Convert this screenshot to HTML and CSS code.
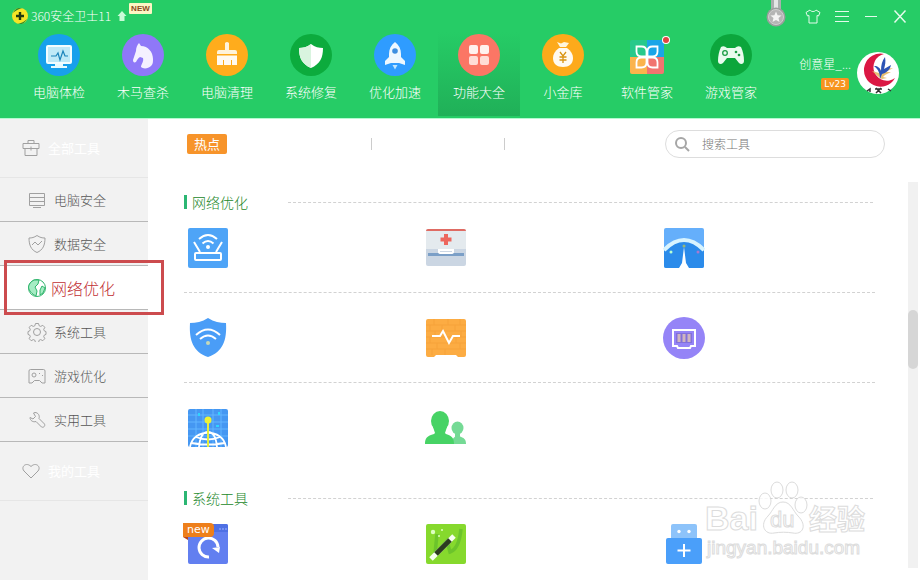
FILE: index.html
```html
<!DOCTYPE html>
<html lang="zh-CN">
<head>
    <meta charset="UTF-8">
    <title>360安全卫士</title>
    <link rel="stylesheet" href="styles.css">
</head>
<body>
    <div class="app">
        <header class="header">
            <div class="titlebar">
                <svg class="logo" viewBox="0 0 16 16"><circle cx="8" cy="8" r="8" fill="#f5e526"/><path d="M1 5a8 8 0 0 1 9-5C6 1 3 3 1 5zM15 11a8 8 0 0 1-9 5c4-1 7-3 9-5z" fill="#2a8a2c"/><path d="M8 4v8M4 8h8" stroke="#223c10" stroke-width="2.4"/></svg>
                <h1 class="title">360安全卫士11</h1>
                <svg class="upgrade" viewBox="0 0 10 12"><path d="M5 1l4.500 5H7.500v5h-5V6H.5z" fill="#c9fbd8"/></svg>
                <span class="new-tag">NEW</span>
                <div class="window-tools">
                    <button class="medal" aria-label="勋章"><svg viewBox="0 0 20 28"><path d="M5 0h10v10H5z" fill="#a9b0ad"/><path d="M8 0h4v9H8z" fill="#e4e6e5"/><circle cx="10" cy="17" r="9.500" fill="#9b9f9d"/><circle cx="10" cy="17" r="7.500" fill="#b5b5b5" stroke="#cfcfcf"/><path d="M10 11.500l1.600 3.700 4 .3-3.100 2.600 1 3.900-3.500-2.100L6.500 22l1-3.900-3.100-2.600 4-.3z" fill="#f4f4f4"/></svg></button>
                    <button class="win-btn" aria-label="换肤"><svg viewBox="0 0 16 16"><path d="M5 2C6 4 10 4 11 2l4 2.500-1.500 3.500-1.500-.5V15H4V7.500L2.500 8 1 4.500z"/></svg></button>
                    <button class="win-btn" aria-label="菜单"><svg viewBox="0 0 16 16"><path d="M1 3.500h14M1 8.500h14M1 13.500h14"/></svg></button>
                    <button class="win-btn" aria-label="最小化"><svg viewBox="0 0 16 16"><path d="M2 8.500h12"/></svg></button>
                    <button class="win-btn" aria-label="关闭"><svg viewBox="0 0 16 16"><path d="M2.500 2.500l11 12M13.500 2.500l-11 12" stroke-width="1.500"/></svg></button>
                </div>
            </div>
            <div class="header-main">
                <nav class="nav">
                    <a class="nav-item" href="#"><svg class="nav-icon" viewBox="0 0 42 42"><circle cx="21" cy="21" r="21" fill="#18a0ec"/><path d="M17 29h8v3h4v2H13v-2h4z" fill="#e8fbff"/><rect x="8" y="11" width="26" height="19" rx="2" fill="#f3fdff"/><rect x="10" y="13" width="22" height="15" fill="#bfe9f7"/><path d="M13 22h5l2-3 2 7 3-9 2 5h3" fill="none" stroke="#1b83ba" stroke-width="1.200"/></svg><span>电脑体检</span></a>
                    <a class="nav-item" href="#"><svg class="nav-icon" viewBox="0 0 42 42"><circle cx="21" cy="21" r="21" fill="#8f78f8"/><path d="M17 9l2 3c7 0 12 6 12 13 0 3 0 5-2 7-3 3-8 3-10 1 0-3 3-5 2-9l-3-1c-2 1-3 3-4 5-2 1-3 0-3-2l3-9c0-3 1-6 3-8z" fill="#f4f0ff"/></svg><span>木马查杀</span></a>
                    <a class="nav-item" href="#"><svg class="nav-icon" viewBox="0 0 42 42"><circle cx="21" cy="21" r="21" fill="#ffac1c"/><path d="M19 9q2-2 4 0v7h6q2 0 2 2v2H11v-2q0-2 2-2h6z" fill="#fff3da"/><path d="M11 21.500h20V31h-5v-5h-1v5h-7v-5h-1v5h-6z" fill="#fffaf0"/></svg><span>电脑清理</span></a>
                    <a class="nav-item" href="#"><svg class="nav-icon" viewBox="0 0 42 42"><circle cx="21" cy="21" r="21" fill="#0cab3d"/><path d="M21 10c4 3 8 4 12 4 0 10-3 16-12 20C12 30 9 24 9 14c4 0 8-1 12-4z" fill="#fff"/><path d="M21 10v24C12 30 9 24 9 14c4 0 8-1 12-4z" fill="#d9f4df"/></svg><span>系统修复</span></a>
                    <a class="nav-item" href="#"><svg class="nav-icon" viewBox="0 0 42 42"><circle cx="21" cy="21" r="21" fill="#2f9cff"/><path d="M21 8c4 3 6 7 6 12v3l4 4v4l-6-2h-8l-6 2v-4l4-4v-3c0-5 2-9 6-12z" fill="#eef8ff"/><circle cx="21" cy="17" r="2.800" fill="#3f8fe0"/><path d="M18.500 31h5L21 35.500z" fill="#bfe6ff"/></svg><span>优化加速</span></a>
                    <a class="nav-item active" href="#"><svg class="nav-icon" viewBox="0 0 42 42"><circle cx="21" cy="21" r="21" fill="#fb7665"/><g fill="#fff1ee"><rect x="11" y="11" width="9" height="9" rx="2"/><rect x="22" y="11" width="9" height="9" rx="2"/><rect x="11" y="22" width="9" height="9" rx="2" fill="#ffdcd6"/><rect x="22" y="22" width="9" height="9" rx="2" fill="#ffdcd6"/></g></svg><span>功能大全</span></a>
                    <a class="nav-item" href="#"><svg class="nav-icon" viewBox="0 0 42 42"><circle cx="21" cy="21" r="21" fill="#fdaa1b"/><path d="M15 8l4 1.500L22 8l5 1-3 4h-6z" fill="#fff6dc"/><path d="M17 14h8c4 3 6 6 6 10 0 6-4 9-10 9s-10-3-10-9c0-4 2-7 6-10z" fill="#fffaf0"/><path d="M18 18l3 4 3-4M21 22v7M17.500 23h7M17.500 26h7" fill="none" stroke="#d9930f" stroke-width="1.300"/></svg><span>小金库</span></a>
                    <a class="nav-item" href="#"><svg class="nav-icon" viewBox="0 0 42 42"><path d="M6 6h15v17H4V8q0-2 2-2z" fill="#27c98b"/><path d="M21 6h15q2 0 2 2v15H21z" fill="#1aa5e8"/><path d="M4 23h17v17H6q-2 0-2-2z" fill="#fbb44c"/><path d="M21 23h17v15q0 2-2 2H21z" fill="#f17470"/><g fill="none" stroke="#fff" stroke-width="1.800"><path d="M20.500 22.500h-5q-5 0-5-5v-5h5q5 0 5 5zM21.500 22.500v-5q0-5 5-5h5v5q0 5-5 5zM20.500 23.500v5q0 5-5 5h-5v-5q0-5 5-5zM21.500 23.500h5q5 0 5 5v5h-5q-5 0-5-5z"/></g><circle cx="40" cy="6" r="4" fill="#fff"/><circle cx="40" cy="6" r="3" fill="#e04540"/></svg><span>软件管家</span></a>
                    <a class="nav-item" href="#"><svg class="nav-icon" viewBox="0 0 42 42"><circle cx="21" cy="21" r="21" fill="#0ca63c"/><path d="M11 13q3-2 6 1h8q3-3 6-1c2 4 3 9 3 14 0 3-3 4-5 2l-4-5h-8l-4 5c-2 2-5 1-5-2 0-5 1-10 3-14z" fill="#e9fbee"/><circle cx="15" cy="19" r="2.300" fill="none" stroke="#1a9c44" stroke-width="1.300"/><circle cx="26" cy="18" r="1.300" fill="#1a9c44"/><circle cx="29" cy="21" r="1.300" fill="#1a9c44"/></svg><span>游戏管家</span></a>
                </nav>
                <div class="user">
                    <div class="user-info">
                        <span class="user-name">创意星_...</span>
                        <span class="user-level">Lv23</span>
                    </div>
                    <svg class="avatar" viewBox="0 0 42 42"><circle cx="21" cy="21" r="21" fill="#fff"/><path d="M27 2A16.500 16.500 0 1 0 38 26 13.500 13.500 0 1 1 27 2z" fill="#db1743"/><path d="M23 26l-8-7 7 2 1-1-5-6 5 3 2 3 3-3 8-1-7 4 5 0-6 3-2 2 4 1-5 1z" fill="#e6bf72"/><path d="M23 27c0-5-1-9-6-13 4 0 6 2 7 5 0-6 1-10 4-14 1 5 0 8-1 12l7-4c-1 5-5 8-9 9z" fill="#2c53b5"/><path d="M10 39l3-2v3M18 37h7M19 36l5 5M24 36l-5 5M31 37l3 2" stroke="#333" stroke-width="1.500" fill="none"/></svg>
                </div>
            </div>
        </header>

        <div class="content">
            <aside class="sidebar">
                <a class="side-item side-group" href="#"><svg class="side-icon" viewBox="0 0 20 20"><path d="M2 5.500h16v5H2zM4 10.500h12v7H4zM7 5.500v-3h6v3M10 8.500v4"/></svg><span>全部工具</span></a>
                <a class="side-item" href="#"><svg class="side-icon" viewBox="0 0 20 20"><path d="M2.500 3.500h15v12h-15zM2.500 7.500h15M2.500 11.500h15M6 17.500h8"/></svg><span>电脑安全</span></a>
                <a class="side-item" href="#"><svg class="side-icon" viewBox="0 0 20 20"><path d="M10 1.500c3 2 5 2.500 8 2.500 0 7-2 12-8 14.500C4 16 2 11 2 4c3 0 5-.5 8-2.500zM5 11l3-3 3 3 4-4"/></svg><span>数据安全</span></a>
                <a class="side-item current" href="#"><svg class="side-icon" viewBox="0 0 20 20"><circle cx="10" cy="10" r="8.500"/><path d="M4 4l3-2 5 0-1 4-3 3 2 4-1 5C5 16 2 13 1.500 9 2 7 3 5 4 4zM15 8l3 2-2 5-3 2 0-5z" fill="#a6ecc4"/></svg><span>网络优化</span></a>
                <a class="side-item" href="#"><svg class="side-icon" viewBox="0 0 20 20"><circle cx="10" cy="10" r="3.500"/><path d="M8.500 1.500h3l.7 2.300 1.500.6 2.100-1.100 2 2-1.100 2.200.6 1.400 1.700.7v2.800l-1.700.7-.6 1.400 1.100 2.200-2 2-2.100-1.100-1.500.6-.7 2.300h-3l-.7-2.300-1.500-.6-2.100 1.100-2-2 1.100-2.200-.6-1.400-1.700-.7V9.600l1.700-.7.6-1.400-1.100-2.200 2-2 2.100 1.100 1.500-.6z"/></svg><span>系统工具</span></a>
                <a class="side-item" href="#"><svg class="side-icon" viewBox="0 0 20 20"><path d="M3.500 3.500h13q1.500 0 1.500 1.500v12h-3l-2.500-2.500h-5L5 17H2V5q0-1.500 1.500-1.500z"/><circle cx="7" cy="9" r="2"/><path d="M12 7l1 1M15 9l1 1"/></svg><span>游戏优化</span></a>
                <a class="side-item" href="#"><svg class="side-icon" viewBox="0 0 20 20"><path d="M8 2.500c3 0 5 3 4 6l5.500 5.500c1 2-1 4-3 3L9 11.500c-3 1-6-1-6-4l3 1.500 2.500-2.500L6.500 3z"/></svg><span>实用工具</span></a>
                <a class="side-item side-group" href="#"><svg class="side-icon" viewBox="0 0 20 20"><path d="M10 17L3 10C-.5 6 5 .5 10 5.500 15 .5 20.500 6 17 10z"/></svg><span>我的工具</span></a>
                <div class="highlight"></div>
            </aside>

            <main class="main">
                <div class="toolbar">
                    <span class="hot">热点</span>
                    <div class="hot-links"><span></span><span></span></div>
                    <form class="search">
                        <svg viewBox="0 0 16 16"><circle cx="7" cy="7" r="5"/><path d="M11 11l4 4"/></svg>
                        <input type="search" aria-label="搜索工具" placeholder="搜索工具">
                    </form>
                </div>

                <div class="list-wrap">
                    <div class="list">
                        <section class="section">
                            <h2 class="section-title">网络优化</h2>
                            <div class="row">
                                <button class="tool" aria-label="路由器卫士"><svg viewBox="0 0 42 42"><rect x="1" y="1" width="40" height="40" rx="2" fill="#4ea4f7"/><g fill="none" stroke="#fff" stroke-width="2"><rect x="8" y="26" width="26" height="7" rx="1"/><path d="M13 25L7 15M29 25l6-10M12 12q9-8 18 0M15.500 16.500q5.500-5 11 0"/></g><circle cx="21" cy="20" r="2" fill="#fff"/></svg></button>
                                <button class="tool" aria-label="断网急救箱"><svg viewBox="0 0 42 42"><path d="M1 4q0-2 2-2h36q2 0 2 2v18H1z" fill="#e4eaee"/><path d="M1 4q0-2 2-2h36q2 0 2 2z" fill="#df6b63"/><path d="M21 7v11M15.500 12.500h11" stroke="#ed665d" stroke-width="4"/><path d="M1 22h40v15q0 2-2 2H3q-2 0-2-2z" fill="#cbd6e3"/><path d="M3 26h36v3H3z" fill="#7b9fc7"/><path d="M14 23v2q0 1 2 1h10q2 0 2-1v-2z" fill="#cbd6e3" stroke="#fff" stroke-width="2"/></svg></button>
                                <button class="tool" aria-label="宽带测速器"><svg viewBox="0 0 42 42"><rect x="1" y="1" width="40" height="40" rx="2" fill="#65affb"/><path d="M1 24q20-20 40 0v15q0 2-2 2H3q-2 0-2-2z" fill="#2b8bea"/><path d="M1 23q20-20 40 0" fill="none" stroke="#d8f4ff" stroke-width="4"/><path d="M21 20l2 16 3 5H16l3-5z" fill="#fff"/><circle cx="8" cy="25" r="1.500" fill="#b8ffd2"/><circle cx="21" cy="19" r="1.500" fill="#98b878"/><circle cx="35" cy="25" r="1.500" fill="#a879cf"/></svg></button>
                            </div>
                            <div class="row">
                                <button class="tool" aria-label="WiFi防护"><svg viewBox="0 0 42 42"><path d="M21 1c6 4 12 5 18 5 1 17-3 29-18 34C6 35 2 23 3 6c6 0 12-1 18-5z" fill="#4a9df7"/><path d="M9 18q12-11 24 0M13 22q8-7 16 0" fill="none" stroke="#fff" stroke-width="2"/><circle cx="21" cy="26" r="2" fill="#c6d8b7"/></svg></button>
                                <button class="tool" aria-label="流量防火墙"><svg viewBox="0 0 42 42"><path d="M1 4q0-2 2-2h36q2 0 2 2v34q0 2-2 2h-6l-2-2H11l-2 2H3q-2 0-2-2z" fill="#fcac43"/><path d="M1 8h40M1 14h40M1 20h40M1 26h40M1 32h40M9 2v6M23 2v6M35 2v6M5 8v6M17 8v6M30 8v6M10 14v6M36 14v6M5 20v6M31 20v6M12 26v6M35 26v6M7 32v6M20 32v6" stroke="#f6a23b" stroke-width="1" fill="none"/><path d="M7 19h8l3-5 6 12 4-7h7" fill="none" stroke="#fff" stroke-width="2"/></svg></button>
                                <button class="tool" aria-label="网络连接"><svg viewBox="0 0 42 42"><circle cx="21" cy="21" r="21" fill="#9584f7"/><path d="M10 13h22v16h-4l-1 2H15l-1-2h-4z" fill="none" stroke="#fff" stroke-width="2"/><path d="M13 16h16v10H13z" fill="#8270d9"/><path d="M16 17v8M21 17v8M26 17v8" stroke="#cfb5c0" stroke-width="3"/></svg></button>
                            </div>
                            <div class="row">
                                <button class="tool" aria-label="DNS优选"><svg viewBox="0 0 42 42"><rect x="1" y="2" width="40" height="38" rx="2" fill="#4597f2"/><path d="M1 8h40M1 15h40M1 22h40M1 29h40M9 2v38M16 2v38M26 2v38M34 2v38" stroke="#62b5ff" fill="none" stroke-width="1"/><path d="M11 6h2v3h-2zM31 5h2v3h-2zM29 18h3v2h-3z" fill="#2fd4ff"/><path d="M3 40C6 21 36 21 39 40M12 40c1-11 4-15 9-15s8 4 9 15M9 30q12 5 24 0M4 36q17 3 34 0" fill="none" stroke="#fff" stroke-width="1.800"/><path d="M21 13v27" stroke="#e4ee3d" stroke-width="2"/><circle cx="21" cy="13" r="3.500" fill="#edf235"/></svg></button>
                                <button class="tool" aria-label="共享管理"><svg viewBox="0 0 42 42"><path d="M27 37c0-5 1-6 4-8h3c5 2 7 3 7 8z" fill="#75da95"/><path d="M30 25h5v6h-5z" fill="#75da95"/><ellipse cx="32.500" cy="21" rx="6" ry="6.500" fill="#75da95"/><path d="M0 37c0-6 2-8 9-10q2-1 1-3h10q-1 2 1 3c6 2 8 4 8 10z" fill="#47d365"/><ellipse cx="15" cy="14" rx="9" ry="10" fill="#47d365"/><path d="M8 20h14l-2 6H10z" fill="#47d365"/></svg></button>
                            </div>
                        </section>
                        <section class="section">
                            <h2 class="section-title">系统工具</h2>
                            <div class="row">
                                <button class="tool" aria-label="系统重装"><svg viewBox="0 0 42 42"><rect x="1" y="1" width="40" height="40" rx="2" fill="#627ff0"/><path d="M1 3q0-2 2-2h36q2 0 2 2v6H1z" fill="#4f70e4"/><path d="M32 6h2M35 6h2M38 6h2" stroke="#9fb2ff"/><path d="M22 34a9.500 9.500 0 1 1 9-10" fill="none" stroke="#fff" stroke-width="3"/><path d="M25 25l8-1-1 6z" fill="#fff"/></svg><span class="tool-new">new</span></button>
                                <button class="tool" aria-label="魔法美化"><svg viewBox="0 0 42 42"><rect x="1" y="1" width="40" height="40" rx="2" fill="#86d92d"/><path d="M12 11l-2 20 12-13 3 11q9-3 11-23" fill="none" stroke="#6cc42b" stroke-width="3.500"/><path d="M6 36l23-23" stroke="#f6fff0" stroke-width="5"/><path d="M11 31l14-14" stroke="#2b3a20" stroke-width="5"/><circle cx="8" cy="9" r="2.200" fill="#dcffc0"/><circle cx="17" cy="7" r="1" fill="#dcffc0"/><circle cx="14" cy="13" r="1" fill="#dcffc0"/></svg></button>
                                <button class="tool" aria-label="U盘助手"><svg viewBox="0 0 42 42"><path d="M8 3q0-2 2-2h22q2 0 2 2v13H8z" fill="#8dc3fa"/><circle cx="16" cy="8.500" r="1.700" fill="#fff"/><circle cx="26" cy="8.500" r="1.700" fill="#fff"/><rect x="3" y="15" width="36" height="26" rx="2" fill="#4a9ffa"/><path d="M21 21v13M14.500 27.500h13" stroke="#fff" stroke-width="2"/></svg></button>
                            </div>
                        </section>
                    </div>
                    <div class="scrollbar"><div class="thumb"></div></div>
                </div>
            </main>
        </div>

        <svg class="watermark" viewBox="0 0 170 86">
            <g fill="#fff" stroke="#d4d4d4" stroke-width="1">
                <text class="wm-bold" x="1" y="54" font-size="34">Bai</text>
                <ellipse cx="61" cy="25" rx="6" ry="8"/>
                <ellipse cx="73" cy="14" rx="6" ry="8"/>
                <ellipse cx="88" cy="14" rx="6" ry="8"/>
                <ellipse cx="97" cy="29" rx="6" ry="8"/>
                <path d="M79 26c8 0 10 9 15 14 10 10 4 19-5 17-6-1-13-1-19 0-9 2-15-8-6-17 5-5 7-14 15-14z"/>
                <text class="wm-text" x="66" y="51" font-size="22">du</text>
                <text class="wm-bold" x="105" y="54" font-size="28">经验</text>
                <text class="wm-text" x="3" y="78" font-size="19">jingyan.baidu.com</text>
            </g>
        </svg>
    </div>
</body>
</html>
```
FILE: styles.css
```css
* {
    margin: 0;
    padding: 0;
    box-sizing: border-box;
}

body {
    background: #fff;
    font-family: "Noto Sans CJK SC", "Liberation Sans", sans-serif;
    font-size: 13px;
    font-weight: 300;
    line-height: 20px;
    color: #555;
    overflow: hidden;
}

a {
    color: inherit;
    text-decoration: none;
}

button {
    border: none;
    background: none;
    cursor: pointer;
}

svg {
    display: block;
    flex-shrink: 0;
}

.app {
    position: relative;
    display: flex;
    flex-direction: column;
    height: 100vh;
}

/* header */
.header {
    background: #26cc66;
    color: #fff;
    border-bottom: 1px solid #b4fbd0;
}

.titlebar {
    display: flex;
    align-items: center;
    height: 32px;
    padding: 0 6px 0 12px;
}

.logo {
    width: 16px;
    height: 16px;
    margin-right: 3px;
}

.title {
    font-size: 12px;
    font-weight: 300;
}

.upgrade {
    width: 10px;
    height: 12px;
    margin-left: 6px;
}

.new-tag {
    align-self: flex-start;
    margin: 3px 0 0 2px;
    padding: 0 2px;
    background: #fdf6c4;
    border-radius: 1px;
    color: #8a4a1c;
    font-family: "Liberation Sans", sans-serif;
    font-size: 8px;
    font-weight: bold;
    line-height: 11px;
}

.window-tools {
    display: flex;
    align-items: center;
    margin-left: auto;
}

.medal {
    align-self: flex-start;
    width: 20px;
    height: 28px;
    margin-right: 12px;
}

.win-btn {
    display: flex;
    align-items: center;
    justify-content: center;
    width: 29px;
    height: 32px;
}

.win-btn svg {
    width: 16px;
    height: 16px;
    fill: none;
    stroke: #e4fbec;
}

.header-main {
    display: flex;
    justify-content: space-between;
    padding: 0 21px 2px 18px;
}

.nav {
    display: flex;
    gap: 2px;
}

.nav-item {
    display: flex;
    flex-direction: column;
    align-items: center;
    gap: 6px;
    width: 82px;
    height: 84px;
    padding-top: 2px;
}

.nav-item.active {
    background: linear-gradient(#26cc66, #20b058);
}

.nav-icon {
    width: 42px;
    height: 42px;
    overflow: visible;
}

.user {
    display: flex;
    gap: 6px;
    padding-top: 20px;
}

.user-info {
    display: flex;
    flex-direction: column;
    align-items: flex-end;
    gap: 4px;
    padding-top: 2px;
}

.user-name {
    font-size: 12px;
}

.user-level {
    margin-right: 2px;
    padding: 0 3px;
    background: #f7941e;
    border-radius: 2px;
    font-family: "DejaVu Sans", sans-serif;
    font-size: 9px;
    font-weight: 400;
    line-height: 12px;
}

.avatar {
    width: 42px;
    height: 42px;
}

/* sidebar */
.content {
    display: flex;
    flex: 1;
    min-height: 0;
}

.sidebar {
    position: relative;
    width: 148px;
    flex-shrink: 0;
    background: #f2f2f2;
}

.side-item {
    display: flex;
    align-items: center;
    gap: 7px;
    height: 44px;
    padding-left: 27px;
    border-bottom: 1px solid #b8b8b8;
}

.side-icon {
    width: 20px;
    height: 20px;
    fill: none;
    stroke: #a0a0a0;
}

.side-group {
    height: 59px;
    padding-left: 21px;
    border-bottom-color: #e6e6e6;
    color: #fff;
    font-weight: 400;
}

.side-item.current {
    gap: 4px;
    background: #fff;
    color: #bf2f34;
    font-size: 16px;
}

.current .side-icon {
    stroke: #2fb56c;
}

.highlight {
    position: absolute;
    top: 141px;
    left: 4px;
    width: 160px;
    height: 55px;
    border: 3px solid #cc4b4e;
    pointer-events: none;
}

/* main */
.main {
    display: flex;
    flex-direction: column;
    flex: 1;
    min-width: 0;
}

.toolbar {
    display: flex;
    align-items: center;
    height: 50px;
    margin-bottom: 13px;
    padding: 0 35px 0 39px;
}

.hot {
    width: 40px;
    background: #f7942a;
    border-radius: 2px;
    color: #fff;
    font-size: 13px;
    font-weight: 400;
    text-align: center;
}

.hot-links {
    display: flex;
    margin-left: 12px;
}

.hot-links span {
    width: 133px;
    height: 12px;
    border-right: 1px solid #ccc;
}

.search {
    display: flex;
    align-items: center;
    gap: 12px;
    width: 220px;
    height: 28px;
    margin-left: auto;
    padding: 0 8px;
    border: 1px solid #ddd;
    border-radius: 14px;
}

.search svg {
    width: 16px;
    height: 16px;
    fill: none;
    stroke: #a6a6a6;
    stroke-width: 2;
}

.search input {
    flex: 1;
    min-width: 0;
    border: none;
    outline: none;
    background: none;
    font: inherit;
    font-size: 12px;
}

.search input::placeholder {
    color: #777;
}

.list-wrap {
    display: flex;
    flex: 1;
    min-height: 0;
}

.list {
    flex: 1;
    padding: 0 33px 0 36px;
    overflow: hidden;
}

.section-title {
    display: flex;
    align-items: center;
    height: 40px;
    padding-right: 2px;
    color: #23882a;
    font-size: 14px;
    font-weight: 300;
}

.section-title::before {
    content: "";
    width: 3px;
    height: 14px;
    margin-right: 5px;
    background: #2bb673;
}

.section-title::after {
    content: "";
    flex: 1;
    margin-left: 40px;
    border-top: 1px dashed #d2d2d2;
}

.row {
    display: grid;
    grid-template-columns: repeat(3, 1fr);
    gap: 23px;
    padding: 24px 0 23px;
    border-bottom: 1px dashed #d2d2d2;
}

.section-title + .row {
    padding-top: 5px;
}

.row:last-child {
    margin-bottom: 6px;
    border-bottom: none;
}

.tool {
    position: relative;
    width: 42px;
    height: 42px;
    margin-left: 3px;
}

.tool-new {
    position: absolute;
    top: 0;
    left: -4px;
    padding: 0 4px;
    background: #ee7f1b;
    border-radius: 0 4px 4px 0;
    color: #fff;
    font: 11px/14px "DejaVu Sans", sans-serif;
}

.tool-new::after {
    content: "";
    position: absolute;
    top: 100%;
    left: 0;
    border-top: 3px solid #b8451c;
    border-left: 5px solid transparent;
}

.scrollbar {
    width: 10px;
    margin: 0 2px 12px 0;
    padding-top: 128px;
    background: #f1f1f1;
}

.thumb {
    height: 59px;
    border-radius: 5px;
    background: #d6d6d6;
}

.watermark {
    position: absolute;
    right: 46px;
    bottom: 18px;
    width: 170px;
    height: 86px;
    opacity: 0.8;
    pointer-events: none;
}

.wm-bold {
    font-family: "Liberation Sans", "Noto Sans CJK SC", sans-serif;
    font-weight: bold;
}

.wm-text {
    font-family: "Liberation Sans", sans-serif;
    font-weight: 400;
}
```
